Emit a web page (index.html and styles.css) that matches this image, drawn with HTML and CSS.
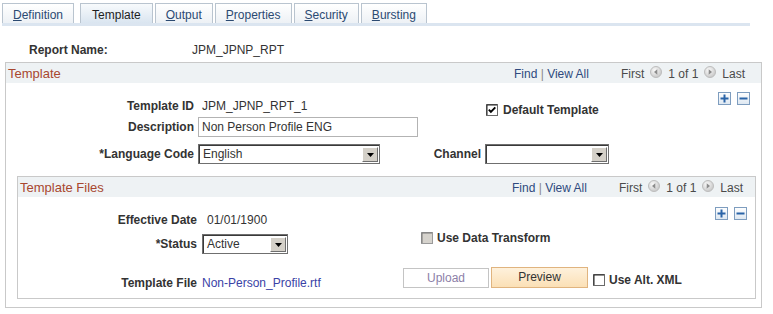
FILE: index.html
```html
<!DOCTYPE html>
<html lang="en">
<head>
<meta charset="utf-8">
<title>Template</title>
<link rel="stylesheet" href="styles.css">
</head>
<body>
<div class="tabs">
  <div class="tab"><u>D</u>efinition</div>
  <div class="tab tab-active">Template</div>
  <div class="tab"><u>O</u>utput</div>
  <div class="tab"><u>P</u>roperties</div>
  <div class="tab"><u>S</u>ecurity</div>
  <div class="tab"><u>B</u>ursting</div>
</div>
<div class="tabline"></div>

<div class="report-row"><span class="report-label">Report Name:</span><span class="report-val">JPM_JPNP_RPT</span></div>

<section class="box outer">
  <div class="band band-outer">
    <span class="band-title">Template</span>
    <div class="nav">
      <span class="find"><a class="navlink">Find</a> <span class="sep">|</span> <a class="navlink">View All</a></span>
      <span class="pager">
        <span>First</span>
        <svg class="navbtn" width="14" height="12" viewBox="-1 0 14 12"><defs><radialGradient id="g1" cx="0.4" cy="0.35" r="0.7"><stop offset="0" stop-color="#fbfbfb"/><stop offset="1" stop-color="#c4c4c4"/></radialGradient></defs><circle cx="6" cy="6" r="5.5" fill="url(#g1)" stroke="#bdbdbd"/><polygon points="7.3,3.3 7.3,8.7 4,6" fill="#8c8c8c"/></svg>
        <span>1 of 1</span>
        <svg class="navbtn" width="14" height="12" viewBox="-1 0 14 12"><circle cx="6" cy="6" r="5.5" fill="url(#g1)" stroke="#bdbdbd"/><polygon points="4.7,3.3 4.7,8.7 8,6" fill="#8c8c8c"/></svg>
        <span>Last</span>
      </span>
    </div>
  </div>

  <div class="tpl-grid">
    <span class="lbl lbl-top tid-lbl">Template ID</span>
    <span class="val tid-val">JPM_JPNP_RPT_1</span>
    <span class="chk default-chk">
      <svg width="12" height="12" viewBox="0 0 12 12"><rect x="0.5" y="0.5" width="11" height="11" fill="#fff" stroke="#6a6a6a"/><path d="M1 11V1h10" fill="none" stroke="#222"/><path d="M2.8 5.6 L4.9 7.9 L9.3 3.4" fill="none" stroke="#000" stroke-width="1.9"/></svg>
      <span>Default Template</span>
    </span>
    <div class="rowbtns tpl-btns">
      <svg width="13" height="13" viewBox="0 0 13 13"><defs><linearGradient id="pg" x1="0" y1="0" x2="0" y2="1"><stop offset="0" stop-color="#ffffff"/><stop offset="1" stop-color="#dde7f1"/></linearGradient></defs><rect x="0.5" y="0.5" width="12" height="12" fill="url(#pg)" stroke="#7e9dbf"/><rect x="2.5" y="5.5" width="8" height="2" fill="#2a64a8"/><rect x="5.5" y="2.5" width="2" height="8" fill="#2a64a8"/></svg>
      <svg width="13" height="13" viewBox="0 0 13 13"><rect x="0.5" y="0.5" width="12" height="12" fill="url(#pg)" stroke="#7e9dbf"/><rect x="2.5" y="5.5" width="8" height="2" fill="#2a64a8"/></svg>
    </div>

    <span class="lbl desc-lbl">Description</span>
    <input class="txt desc-input" type="text" value="Non Person Profile ENG" readonly>

    <span class="lbl lang-lbl">*Language Code</span>
    <div class="select lang-select">
      <span class="select-text">English</span>
      <span class="select-btn"><svg width="7" height="4" viewBox="0 0 7 4"><polygon points="0,0 7,0 3.5,4" fill="#000"/></svg></span>
    </div>
    <span class="lbl chan-lbl">Channel</span>
    <div class="select chan-select">
      <span class="select-text"></span>
      <span class="select-btn"><svg width="7" height="4" viewBox="0 0 7 4"><polygon points="0,0 7,0 3.5,4" fill="#000"/></svg></span>
    </div>
  </div>

  <section class="box inner">
    <div class="band band-inner">
      <span class="band-title">Template Files</span>
      <div class="nav">
        <span class="find"><a class="navlink">Find</a> <span class="sep">|</span> <a class="navlink">View All</a></span>
        <span class="pager">
          <span>First</span>
          <svg class="navbtn" width="14" height="12" viewBox="-1 0 14 12"><circle cx="6" cy="6" r="5.5" fill="url(#g1)" stroke="#bdbdbd"/><polygon points="7.3,3.3 7.3,8.7 4,6" fill="#8c8c8c"/></svg>
          <span>1 of 1</span>
          <svg class="navbtn" width="14" height="12" viewBox="-1 0 14 12"><circle cx="6" cy="6" r="5.5" fill="url(#g1)" stroke="#bdbdbd"/><polygon points="4.7,3.3 4.7,8.7 8,6" fill="#8c8c8c"/></svg>
          <span>Last</span>
        </span>
      </div>
    </div>

    <div class="files-grid">
      <span class="lbl lbl-top eff-lbl">Effective Date</span>
      <span class="val eff-val">01/01/1900</span>
      <div class="rowbtns files-btns">
        <svg width="13" height="13" viewBox="0 0 13 13"><rect x="0.5" y="0.5" width="12" height="12" fill="url(#pg)" stroke="#7e9dbf"/><rect x="2.5" y="5.5" width="8" height="2" fill="#2a64a8"/><rect x="5.5" y="2.5" width="2" height="8" fill="#2a64a8"/></svg>
        <svg width="13" height="13" viewBox="0 0 13 13"><rect x="0.5" y="0.5" width="12" height="12" fill="url(#pg)" stroke="#7e9dbf"/><rect x="2.5" y="5.5" width="8" height="2" fill="#2a64a8"/></svg>
      </div>

      <span class="lbl status-lbl">*Status</span>
      <div class="select status-select">
        <span class="select-text">Active</span>
        <span class="select-btn"><svg width="7" height="4" viewBox="0 0 7 4"><polygon points="0,0 7,0 3.5,4" fill="#000"/></svg></span>
      </div>
      <span class="chk transform-chk">
        <svg width="12" height="12" viewBox="0 0 12 12"><rect x="0.5" y="0.5" width="11" height="11" fill="#d6d3cd" stroke="#9a9a9a"/><path d="M1 11V1h10" fill="none" stroke="#777"/></svg>
        <span>Use Data Transform</span>
      </span>

      <span class="lbl lbl-top file-lbl">Template File</span>
      <a class="file-link">Non-Person_Profile.rtf</a>
      <div class="actions">
        <span class="btn btn-upload">Upload</span>
        <span class="btn btn-preview">Preview</span>
        <svg class="alt-box" width="12" height="12" viewBox="0 0 12 12"><rect x="0.5" y="0.5" width="11" height="11" fill="#fff" stroke="#6a6a6a"/><path d="M1 11V1h10" fill="none" stroke="#222"/></svg>
        <span class="alt-text">Use Alt. XML</span>
      </div>
    </div>
  </section>
</section>
</body>
</html>
```
FILE: styles.css
```css
* { box-sizing: border-box; }

body {
  margin: 0;
  background: #fff;
  color: #333;
  font-family: "Liberation Sans", Arial, sans-serif;
  font-size: 12px;
}

/* tabs */
.tabs {
  display: flex;
  gap: 2px;
  padding: 3px 0 0 2px;
}
.tab {
  height: 20px;
  padding: 4px 10px 0;
  line-height: 14px;
  border: 1px solid #b9c4cf;
  border-bottom: none;
  background: linear-gradient(#ffffff, #edf1f5);
  color: #2b4a72;
  white-space: nowrap;
}
.tab-active {
  margin-left: 4px;
  padding: 4px 11px 0;
  background: linear-gradient(#f7fafc, #dae5f0);
  color: #1e1e1e;
}
.tabline {
  margin-left: 2px;
  width: 748px;
  height: 3px;
  background: #dbe5f0;
}

/* report name */
.report-row {
  display: flex;
  padding: 16px 0 0 29px;
  line-height: 16px;
}
.report-label {
  width: 163px;
  font-weight: bold;
}

/* boxes */
.box { border: 1px solid #c9c9c9; }
.outer {
  width: 757px;
  margin: 4px 0 0 5px;
}
.inner {
  margin: 12px 5px 8px 11px;
}
.band {
  display: flex;
  justify-content: space-between;
  align-items: center;
  height: 20px;
  padding: 1px 16px 0 2px;
  background: #eef2f4;
}
.band-inner { padding-right: 12px; }
.band-title {
  font-size: 13px;
  color: #a8472f;
}
.nav {
  display: flex;
  align-items: center;
}
.find { white-space: nowrap; }
.navlink { color: #2f4a7e; }
.sep { color: #8a8a8a; }
.pager {
  display: flex;
  align-items: center;
  gap: 5px;
  margin-left: 32px;
  color: #4a4a4a;
}
.navbtn { margin-top: -3px; }

/* rows of plus / minus */
.rowbtns {
  display: flex;
  gap: 6px;
  align-self: start;
}

/* labels & values */
.lbl {
  font-weight: bold;
  text-align: right;
  line-height: 20px;
  white-space: nowrap;
}
.lbl-top { line-height: 14px; }
.val {
  line-height: 14px;
  white-space: nowrap;
}

/* Template grid */
.tpl-grid {
  display: grid;
  grid-template-columns: 188px 228px 51px 1fr auto;
  grid-template-rows: 24px 21px 27px;
  column-gap: 4px;
  align-items: end;
  padding: 9px 11px 0 0;
}
.tid-lbl { grid-column: 1; grid-row: 1; margin-bottom: 3px; }
.tid-val { grid-column: 2; grid-row: 1; margin-bottom: 3px; padding-left: 4px; }
.default-chk { grid-column: 4; grid-row: 1; margin-left: 1px; margin-bottom: -1px; }
.tpl-btns { grid-column: 5; grid-row: 1; }
.desc-lbl { grid-column: 1; grid-row: 2; }
.desc-input { grid-column: 2 / span 2; grid-row: 2; }
.lang-lbl { grid-column: 1; grid-row: 3; }
.lang-select { grid-column: 2; grid-row: 3; width: 182px; }
.chan-lbl { grid-column: 3; grid-row: 3; }
.chan-select { grid-column: 4; grid-row: 3; width: 124px; }

/* checkbox + text */
.chk {
  display: flex;
  align-items: center;
  gap: 5px;
  height: 14px;
  font-weight: bold;
  white-space: nowrap;
}
.chk svg { flex: none; }

/* text input */
.txt {
  width: 220px;
  height: 20px;
  margin: 0;
  padding: 0 3px;
  border: 1px solid #b3b3b3;
  background: #fff;
  color: #333;
  font-family: "Liberation Sans", Arial, sans-serif;
  font-size: 12px;
  outline: none;
}

/* dropdown */
.select {
  display: flex;
  height: 20px;
  border: 1px solid #6f6f6f;
  box-shadow: inset 1px 1px 0 #3a3a3a;
  background: #fff;
}
.select-text {
  flex: 1;
  padding: 0 0 0 4px;
  line-height: 18px;
  color: #333;
}
.select-btn {
  display: flex;
  align-items: center;
  justify-content: center;
  width: 16px;
  margin: 2px 1px 1px 0;
  background: #d4d0c8;
  border-top: 1px solid #fff;
  border-left: 1px solid #fff;
  border-right: 1px solid #6e6e6e;
  border-bottom: 1px solid #6e6e6e;
}

/* Template Files grid */
.files-grid {
  display: grid;
  grid-template-columns: 179px 198px 1fr auto;
  grid-template-rows: 20px 27px 36px;
  column-gap: 4px;
  align-items: end;
  padding: 10px 8px 8px 0;
}
.eff-lbl { grid-column: 1; grid-row: 1; }
.eff-val { grid-column: 2; grid-row: 1; padding-left: 6px; }
.files-btns { grid-column: 4; grid-row: 1; }
.status-lbl { grid-column: 1; grid-row: 2; }
.status-select { grid-column: 2; grid-row: 2; width: 86px; margin-left: 1px; }
.transform-chk {
  grid-column: 3;
  grid-row: 2;
  align-self: start;
  margin: 4px 0 0 18px;
  gap: 4px;
}
.file-lbl { grid-column: 1; grid-row: 3; }
.file-link {
  grid-column: 2;
  grid-row: 3;
  padding-left: 1px;
  line-height: 14px;
  color: #3a42a6;
}
.actions {
  grid-column: 3 / span 2;
  grid-row: 3;
  align-self: start;
  display: flex;
  align-items: flex-start;
  margin-top: 13px;
}
.btn {
  display: flex;
  align-items: center;
  justify-content: center;
  white-space: nowrap;
}
.btn-upload {
  width: 86px;
  height: 20px;
  margin-top: 1px;
  border: 1px solid #c4c4c4;
  background: #fff;
  color: #8c80a8;
}
.btn-preview {
  width: 97px;
  height: 21px;
  margin-left: 2px;
  padding-bottom: 2px;
  border: 1px solid #e0b47f;
  background: linear-gradient(#fef1dc, #fbe0b6);
  color: #333;
}
.alt-box {
  flex: none;
  margin: 7px 0 0 5px;
}
.alt-text {
  margin: 6px 0 0 4px;
  line-height: 14px;
  font-weight: bold;
}
```
